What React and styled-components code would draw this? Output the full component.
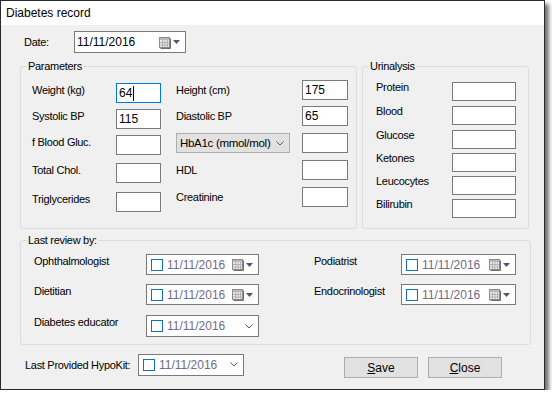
import styled, { createGlobalStyle } from "styled-components";

const GlobalStyle = createGlobalStyle`
  html, body { margin: 0; padding: 0; background: #ffffff; }
  body {
    font-family: "Liberation Sans", Arial, sans-serif;
    font-size: 11px;
    color: #000;
  }
`;

function CalendarIcon() {
  return (
    <svg width="13" height="13" viewBox="0 0 13 13">
      <path d="M12.5 2.5v10h-10" stroke="#6e6e6e" fill="none" />
      <rect x="1.5" y="1.5" width="10" height="10" fill="#ececec" stroke="#8c8c8c" />
      <rect x="2" y="2" width="9" height="2" fill="#b9b9b9" />
      <path d="M4.5 4v7M7 4v7M9.5 4v7M2 6.5h9M2 9h9" stroke="#b3b3b3" />
    </svg>
  );
}

function DropArrow() {
  return (
    <svg width="7" height="4" viewBox="0 0 7 4" style={{ marginLeft: 2 }}>
      <polygon points="0,0 7,0 3.5,4" fill="#4b5878" />
    </svg>
  );
}

function Chevron() {
  return (
    <svg width="8" height="5" viewBox="0 0 8 5">
      <polyline points="0.5,0.5 4,4 7.5,0.5" fill="none" stroke="#5a5a5a" strokeWidth="1" />
    </svg>
  );
}

function DatePicker({ width, height = 21, checkbox, muted, combo, value = "11/11/2016" }) {
  return (
    <PickerBox $w={width} $h={height} $check={checkbox}>
      {checkbox && <CheckBox />}
      <PickerText $muted={muted}>{value}</PickerText>
      {combo ? <Chevron /> : (<><CalendarIcon /><DropArrow /></>)}
    </PickerBox>
  );
}

export default function App() {
  return (
    <>
      <GlobalStyle />
      <Window>
        <TitleBar>Diabetes record</TitleBar>
        <Body>
          <DateRow>
            <RowLabel $w={50}>Date:</RowLabel>
            <DatePicker width={112} height={22} />
          </DateRow>

          <GroupsRow>
            <Group $w={337}>
              <Legend>Parameters</Legend>
              <GroupContent $h={155} $pl={11}>
                <ParamCol $w={129}>
                  <ParamRow $mt={10}><ParamLabel>Weight (kg)</ParamLabel><Field $w={45} $focus>64<Caret /></Field></ParamRow>
                  <ParamRow $mt={6}><ParamLabel>Systolic BP</ParamLabel><Field $w={45}>115</Field></ParamRow>
                  <ParamRow $mt={6}><ParamLabel>f Blood Gluc.</ParamLabel><Field $w={45} /></ParamRow>
                  <ParamRow $mt={8}><ParamLabel>Total Chol.</ParamLabel><Field $w={45} /></ParamRow>
                  <ParamRow $mt={9}><ParamLabel>Triglycerides</ParamLabel><Field $w={45} /></ParamRow>
                </ParamCol>
                <ParamCol $w={172} $ml={15}>
                  <ParamRow $mt={7} $center><ParamLabel>Height (cm)</ParamLabel><Field $w={46}>175</Field></ParamRow>
                  <ParamRow $mt={6} $center><ParamLabel>Diastolic BP</ParamLabel><Field $w={46}>65</Field></ParamRow>
                  <ParamRow $mt={7} $center>
                    <Combo>HbA1c (mmol/mol)<Chevron /></Combo>
                    <Field $w={46} />
                  </ParamRow>
                  <ParamRow $mt={7} $center><ParamLabel>HDL</ParamLabel><Field $w={46} /></ParamRow>
                  <ParamRow $mt={7} $center><ParamLabel>Creatinine</ParamLabel><Field $w={46} /></ParamRow>
                </ParamCol>
              </GroupContent>
            </Group>

            <Group $w={167}>
              <Legend>Urinalysis</Legend>
              <GroupContent $h={155} $pl={13}>
                <ParamCol $w={140}>
                  <UrineRow $mt={9}><span>Protein</span><Field $w={64} $h={19} /></UrineRow>
                  <UrineRow $mt={5}><span>Blood</span><Field $w={64} $h={19} /></UrineRow>
                  <UrineRow $mt={5}><span>Glucose</span><Field $w={64} $h={19} /></UrineRow>
                  <UrineRow $mt={4}><span>Ketones</span><Field $w={64} $h={19} /></UrineRow>
                  <UrineRow $mt={4}><span>Leucocytes</span><Field $w={64} $h={19} /></UrineRow>
                  <UrineRow $mt={4}><span>Bilirubin</span><Field $w={64} $h={19} /></UrineRow>
                </ParamCol>
              </GroupContent>
            </Group>
          </GroupsRow>

          <ReviewGroup>
            <Legend>Last review by:</Legend>
            <GroupContent $h={97} $pl={13}>
              <ParamCol $w={225}>
                <ParamRow $mt={7}><ParamLabel>Ophthalmologist</ParamLabel><DatePicker width={113} checkbox muted /></ParamRow>
                <ParamRow $mt={9}><ParamLabel>Dietitian</ParamLabel><DatePicker width={113} checkbox muted /></ParamRow>
                <ParamRow $mt={10}><ParamLabel>Diabetes educator</ParamLabel><DatePicker width={113} height={22} checkbox muted combo /></ParamRow>
              </ParamCol>
              <ParamCol $w={202} $ml={55}>
                <ParamRow $mt={7}><ParamLabel>Podiatrist</ParamLabel><DatePicker width={115} checkbox muted /></ParamRow>
                <ParamRow $mt={9}><ParamLabel>Endocrinologist</ParamLabel><DatePicker width={115} checkbox muted /></ParamRow>
              </ParamCol>
            </GroupContent>
          </ReviewGroup>

          <BottomRow>
            <RowLabel $w={113}>Last Provided HypoKit:</RowLabel>
            <DatePicker width={106} height={22} checkbox muted combo />
            <Buttons>
              <Button><u>S</u>ave</Button>
              <Button><u>C</u>lose</Button>
            </Buttons>
          </BottomRow>
        </Body>
      </Window>
    </>
  );
}

const Window = styled.div`
  box-sizing: border-box;
  width: 545px;
  height: 390px;
  border: 1px solid #2a2a2a;
  background: #f0f0f0;
  box-shadow: 4px 4px 4px rgba(0, 0, 0, 0.55);
  display: flex;
  flex-direction: column;
`;

const TitleBar = styled.div`
  height: 24px;
  flex: none;
  background: #ffffff;
  display: flex;
  align-items: center;
  padding-left: 5px;
  font-size: 12px;
`;

const Body = styled.div`
  flex: 1;
  display: flex;
  flex-direction: column;
  letter-spacing: -0.3px;
`;

const DateRow = styled.div`
  display: flex;
  align-items: center;
  margin-top: 6px;
  padding-left: 23px;
`;

const RowLabel = styled.span`
  width: ${(p) => p.$w}px;
  flex: none;
`;

const GroupsRow = styled.div`
  display: flex;
  gap: 5px;
  margin-top: 7px;
  padding-left: 19px;
`;

const Group = styled.fieldset`
  box-sizing: border-box;
  width: ${(p) => p.$w}px;
  margin: 0;
  padding: 0;
  border: 1px solid #dcdcdc;
  border-radius: 3px;
  min-width: 0;
`;

const ReviewGroup = styled(Group)`
  width: 511px;
  margin: 5px 0 0 19px;
`;

const Legend = styled.legend`
  margin-left: 6px;
  padding: 0 1px;
  font-size: 11px;
  line-height: 13px;
`;

const GroupContent = styled.div`
  height: ${(p) => p.$h}px;
  display: flex;
  padding-left: ${(p) => p.$pl}px;
`;

const ParamCol = styled.div`
  width: ${(p) => p.$w}px;
  margin-left: ${(p) => p.$ml || 0}px;
  display: flex;
  flex-direction: column;
`;

const ParamRow = styled.div`
  display: flex;
  justify-content: space-between;
  align-items: ${(p) => (p.$center ? "center" : "flex-start")};
  margin-top: ${(p) => p.$mt}px;
`;

const ParamLabel = styled.span`
  line-height: 14px;
`;

const UrineRow = styled(ParamRow)`
  line-height: 11px;
`;

const Field = styled.div`
  box-sizing: border-box;
  width: ${(p) => p.$w}px;
  height: ${(p) => p.$h || 20}px;
  flex: none;
  border: 1px solid ${(p) => (p.$focus ? "#0078d7" : "#7a7a7a")};
  background: #ffffff;
  padding-left: 2px;
  display: flex;
  align-items: center;
  font-size: 12px;
  letter-spacing: 0;
`;

const Caret = styled.span`
  width: 1px;
  height: 15px;
  background: #000;
  margin-left: 1px;
`;

const Combo = styled.div`
  box-sizing: border-box;
  width: 114px;
  height: 20px;
  border: 1px solid #adadad;
  background: #e1e1e1;
  display: flex;
  align-items: center;
  justify-content: space-between;
  padding: 0 5px 0 3px;
  font-size: 11.5px;
`;

const PickerBox = styled.div`
  box-sizing: border-box;
  width: ${(p) => p.$w}px;
  height: ${(p) => p.$h}px;
  flex: none;
  border: 1px solid #7a7a7a;
  background: #ffffff;
  display: flex;
  align-items: center;
  padding: 0 5px 0 ${(p) => (p.$check ? 4 : 2)}px;
  letter-spacing: 0;
`;

const CheckBox = styled.span`
  box-sizing: border-box;
  width: 12px;
  height: 12px;
  flex: none;
  border: 1px solid #1070c8;
  background: #ffffff;
  margin-right: 4px;
`;

const PickerText = styled.span`
  flex: 1;
  font-size: 12px;
  color: ${(p) => (p.$muted ? "#6f6c84" : "#000")};
`;

const BottomRow = styled.div`
  display: flex;
  align-items: center;
  margin-top: 6px;
  padding: 0 42px 0 24px;
`;

const Buttons = styled.div`
  margin-left: auto;
  display: flex;
  gap: 10px;
  align-self: flex-start;
  margin-top: 6px;
`;

const Button = styled.button`
  box-sizing: border-box;
  width: 74px;
  height: 21px;
  padding: 0;
  border: 1px solid #adadad;
  background: #e1e1e1;
  font-family: "Liberation Sans", Arial, sans-serif;
  font-size: 12px;
  color: #000;
  u { text-decoration: underline; }
`;
